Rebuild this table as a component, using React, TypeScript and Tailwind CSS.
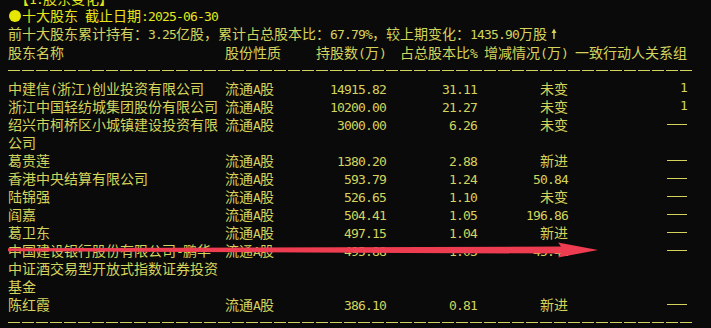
import React from "react";

const MONO = "font-['DejaVu_Sans_Mono',monospace] text-[13px] tracking-[-0.83px]";

function Mixed({ text }: { text: string }) {
  const runs: { a: boolean; s: string }[] = [];
  for (const ch of text) {
    const a = ch.charCodeAt(0) < 128;
    const last = runs[runs.length - 1];
    if (last && last.a === a) last.s += ch;
    else runs.push({ a, s: ch });
  }
  return (
    <>
      {runs.map((r, i) =>
        r.a ? (
          <span key={i} className={MONO}>
            {r.s}
          </span>
        ) : (
          <span key={i}>{r.s}</span>
        )
      )}
    </>
  );
}

type Row = {
  name: string[];
  type: string;
  qty: string;
  pct: string;
  chg: string;
  grp: string;
};

const rows: Row[] = [
  { name: ["中建信(浙江)创业投资有限公司"], type: "流通A股", qty: "14915.82", pct: "31.11", chg: "未变", grp: "1" },
  { name: ["浙江中国轻纺城集团股份有限公司"], type: "流通A股", qty: "10200.00", pct: "21.27", chg: "未变", grp: "1" },
  { name: ["绍兴市柯桥区小城镇建设投资有限", "公司"], type: "流通A股", qty: "3000.00", pct: "6.26", chg: "未变", grp: "-" },
  { name: ["葛贵莲"], type: "流通A股", qty: "1380.20", pct: "2.88", chg: "新进", grp: "-" },
  { name: ["香港中央结算有限公司"], type: "流通A股", qty: "593.79", pct: "1.24", chg: "50.84", grp: "-" },
  { name: ["陆锦强"], type: "流通A股", qty: "526.65", pct: "1.10", chg: "未变", grp: "-" },
  { name: ["阎嘉"], type: "流通A股", qty: "504.41", pct: "1.05", chg: "196.86", grp: "-" },
  { name: ["葛卫东"], type: "流通A股", qty: "497.15", pct: "1.04", chg: "新进", grp: "-" },
  { name: ["中国建设银行股份有限公司-鹏华", "中证酒交易型开放式指数证券投资", "基金"], type: "流通A股", qty: "495.88", pct: "1.03", chg: "45.41", grp: "-" },
  { name: ["陈红霞"], type: "流通A股", qty: "386.10", pct: "0.81", chg: "新进", grp: "-" },
];

const GRID = "grid grid-cols-[217px_91px_70px_91px_91px_119px] pl-[8px]";

function Dashes() {
  return (
    <div className="h-[18px] pl-[8px] flex items-center">
      <div className="w-[686px] h-px bg-[repeating-linear-gradient(90deg,#d4d45c_0px,#d4d45c_12px,transparent_12px,transparent_14px)]" />
    </div>
  );
}

export default function App() {
  return (
    <div className="relative w-[711px] h-[328px] overflow-hidden bg-[#0a0a0a] text-[#d4d45c] font-['Noto_Sans_CJK_SC',sans-serif] text-[14px] leading-[18px] whitespace-pre">
      <div className="-mt-[11px]">
        <div className="h-[18px] pl-[8px] text-[#e6e61a]">
          <Mixed text=" 【1.股东变化】" />
        </div>
        <div className="h-[18px] pl-[8px] flex items-center text-[#e6e61a]">
          <span className="w-[14px] flex justify-center">
            <span className="w-[12px] h-[12px] rounded-full bg-[#e6e600]" />
          </span>
          <span>
            <Mixed text="十大股东 截止日期:2025-06-30" />
          </span>
        </div>
        <div className="h-[18px] pl-[8px] flex items-center">
          <span>
            <Mixed text="前十大股东累计持有：3.25亿股，累计占总股本比：67.79%，较上期变化：1435.90万股" />
          </span>
          <svg width="14" height="18" viewBox="0 0 14 18" className="shrink-0">
            <path d="M7 14 V5" stroke="#d4d45c" strokeWidth="1.4" />
            <path d="M4.5 8 L7 3.5 L9.5 8 Z" fill="#d4d45c" />
          </svg>
        </div>
        <div className={GRID + " h-[18px]"}>
          <div>股东名称</div>
          <div>股份性质</div>
          <div className="text-right">
            <Mixed text="持股数(万)" />
          </div>
          <div className="text-right">
            <Mixed text="占总股本比%" />
          </div>
          <div className="text-right">
            <Mixed text="增减情况(万)" />
          </div>
          <div className="text-right">一致行动人关系组</div>
        </div>
        <Dashes />
        {rows.map((r, i) => (
          <div key={i} className={GRID}>
            <div>
              {r.name.map((n, j) => (
                <div key={j} className="h-[18px]">
                  <Mixed text={n} />
                </div>
              ))}
            </div>
            <div className="h-[18px]">
              <Mixed text={r.type} />
            </div>
            <div className="h-[18px] text-right">
              <span className={MONO}>{r.qty}</span>
            </div>
            <div className="h-[18px] text-right">
              <span className={MONO}>{r.pct}</span>
            </div>
            <div className="h-[18px] text-right">
              <Mixed text={r.chg} />
            </div>
            <div className="h-[18px] flex items-center justify-end">
              {r.grp === "-" ? (
                <div className="w-[20px] h-px bg-[#d4d45c]" />
              ) : (
                <span className={MONO}>{r.grp}</span>
              )}
            </div>
          </div>
        ))}
        <Dashes />
      </div>
      <svg
        className="absolute left-0 top-0 pointer-events-none"
        width="711"
        height="328"
        viewBox="0 0 711 328"
      >
        <polygon
          points="8,248.3 561,246.6 558,242.5 598,250 558,257.5 561,253.6 8,251.2"
          fill="#ee3d50"
        />
      </svg>
    </div>
  );
}
